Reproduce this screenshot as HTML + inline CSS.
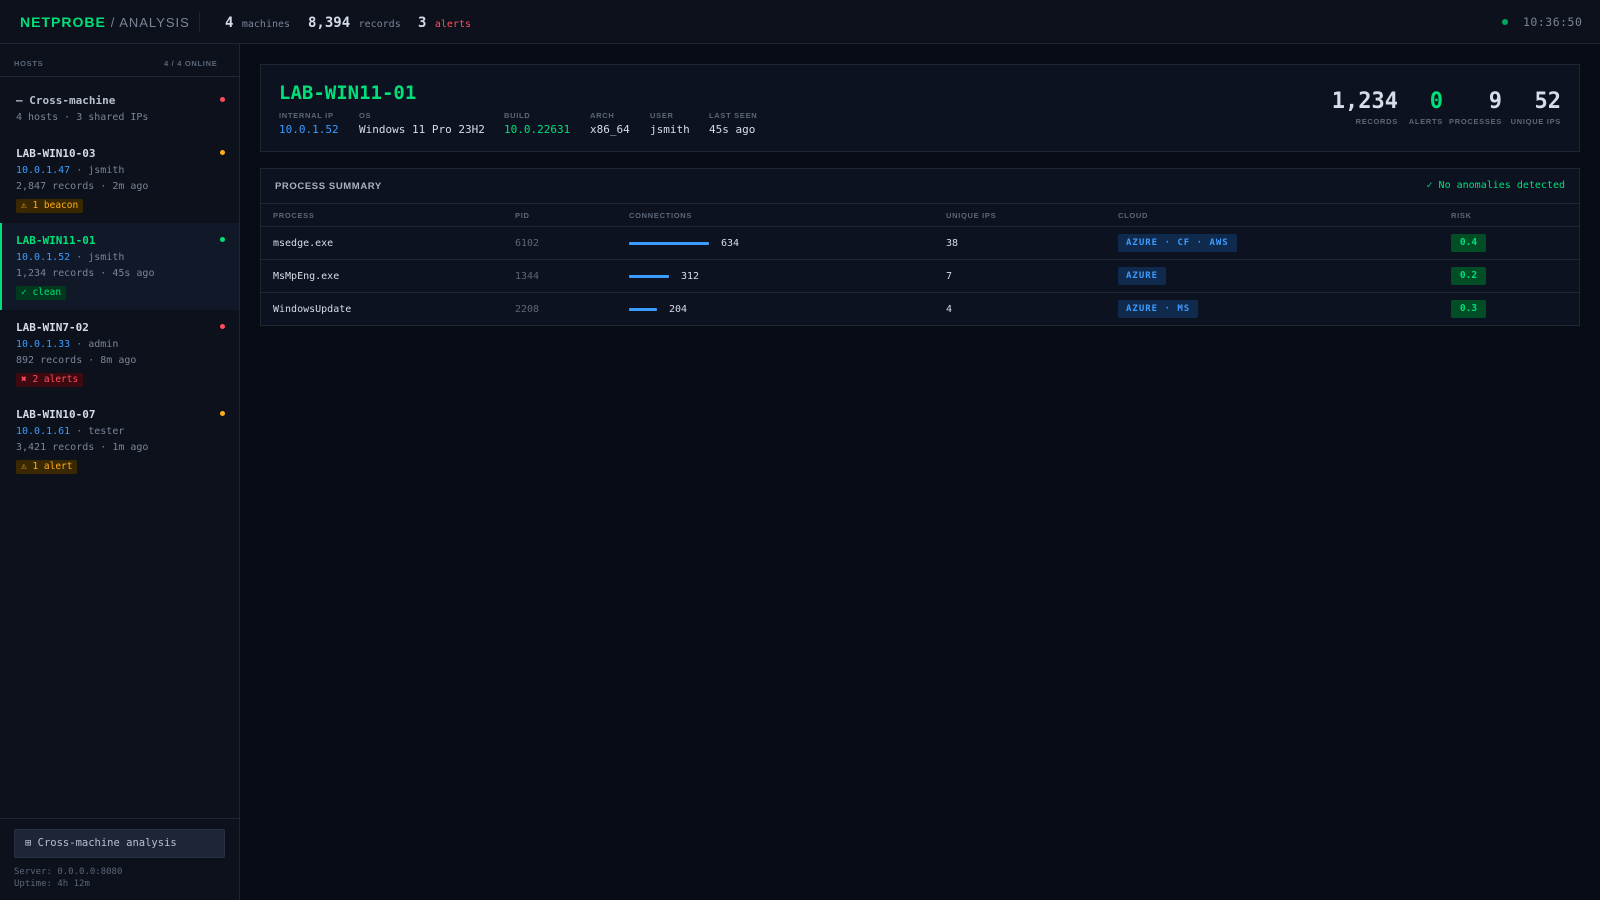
<!DOCTYPE html>
<html><head><meta charset="utf-8"><style>
*{box-sizing:border-box;margin:0;padding:0}
body{width:1600px;height:900px;background:#080c14;font-family:"DejaVu Sans Mono","Liberation Mono",monospace;color:#d6dde8;position:relative;overflow:hidden}
.a{position:absolute;white-space:nowrap}
.lbl{font-family:"Liberation Sans",sans-serif;font-size:7.5px;letter-spacing:0.7px;color:#5c6778;text-transform:uppercase;font-weight:bold}
.hdr{left:0;top:0;width:1600px;height:44px;background:#0c111c;border-bottom:1px solid #1e2636}
.side{left:0;top:44px;width:240px;height:856px;background:#0c111c;border-right:1px solid #1e2636}
.card{background:#0c1220;border:1px solid #1e2636}
.t{font-size:11px;font-weight:bold;color:#d6dde8}
.s{font-size:10px;color:#7a8596}
.ip{color:#3b9cff}
.dot{width:5px;height:5px;border-radius:50%}
.badge{font-size:9.5px;padding:0 5px;height:14px;line-height:14px;border-radius:2px}
.pill{font-size:9px;font-weight:bold;letter-spacing:1px;height:18px;line-height:18px;padding:0 8px;border-radius:2px;background:#0f2a4d;color:#3b9cff}
.risk{font-size:9.5px;font-weight:bold;height:18px;line-height:18px;width:35px;text-align:center;border-radius:2px;background:#004d26;color:#00e07a}
.row{font-size:10px;color:#d6dde8}
.bar{height:3px;background:#3b9cff;border-radius:1px}
</style></head><body>
<div class="a hdr"></div>
<div class="a" style="left:20px;top:14px;font-family:'Liberation Sans',sans-serif;font-size:14px;font-weight:bold;letter-spacing:1px;color:#00e07a">NETPROBE <span style="font-weight:normal;font-size:13px;color:#7a8596;letter-spacing:1px">/ ANALYSIS</span></div>
<div class="a" style="left:199px;top:12px;width:1px;height:20px;background:#1e2636"></div>
<div class="a" style="left:225px;top:15px;font-size:14px;font-weight:bold">4 <span style="font-size:10px;font-weight:normal;color:#7a8596">machines</span></div>
<div class="a" style="left:308px;top:15px;font-size:14px;font-weight:bold">8,394 <span style="font-size:10px;font-weight:normal;color:#7a8596">records</span></div>
<div class="a" style="left:418px;top:15px;font-size:14px;font-weight:bold">3 <span style="font-size:10px;font-weight:normal;color:#ff4d5e">alerts</span></div>
<div class="a dot" style="left:1502px;top:19px;width:6px;height:6px;background:#00a85a"></div>
<div class="a" style="left:1523px;top:15px;font-size:11.5px;color:#7a8596;letter-spacing:0.5px">10:36:50</div>

<div class="a side"></div>
<div class="a lbl" style="left:14px;top:59px">Hosts</div>
<div class="a lbl" style="left:164px;top:59px">4 / 4 Online</div>
<div class="a" style="left:0;top:76px;width:239px;height:1px;background:#1e2636"></div>

<div class="a t" style="left:16px;top:94px;color:#b8c0cc">— Cross-machine</div>
<div class="a s" style="left:16px;top:112px">4 hosts · 3 shared IPs</div>
<div class="a dot" style="left:220px;top:97px;background:#ff4d5e"></div>

<div class="a t" style="left:16px;top:147px">LAB-WIN10-03</div>
<div class="a s" style="left:16px;top:165px"><span class="ip">10.0.1.47</span> · jsmith</div>
<div class="a s" style="left:16px;top:181px">2,847 records · 2m ago</div>
<div class="a badge" style="left:16px;top:199px;background:#3a2800;color:#ffae1a">⚠ 1 beacon</div>
<div class="a dot" style="left:220px;top:150px;background:#ffae1a"></div>

<div class="a" style="left:0;top:223px;width:239px;height:87px;background:#111827;border-left:2px solid #00e07a"></div>
<div class="a t" style="left:16px;top:234px;color:#00e07a">LAB-WIN11-01</div>
<div class="a s" style="left:16px;top:252px"><span class="ip">10.0.1.52</span> · jsmith</div>
<div class="a s" style="left:16px;top:268px">1,234 records · 45s ago</div>
<div class="a badge" style="left:16px;top:286px;background:#00391d;color:#00e07a">✓ clean</div>
<div class="a dot" style="left:220px;top:237px;background:#00e07a"></div>

<div class="a t" style="left:16px;top:321px">LAB-WIN7-02</div>
<div class="a s" style="left:16px;top:339px"><span class="ip">10.0.1.33</span> · admin</div>
<div class="a s" style="left:16px;top:355px">892 records · 8m ago</div>
<div class="a badge" style="left:16px;top:373px;background:#3d0a12;color:#ff4d5e">✖ 2 alerts</div>
<div class="a dot" style="left:220px;top:324px;background:#ff4d5e"></div>

<div class="a t" style="left:16px;top:408px">LAB-WIN10-07</div>
<div class="a s" style="left:16px;top:426px"><span class="ip">10.0.1.61</span> · tester</div>
<div class="a s" style="left:16px;top:442px">3,421 records · 1m ago</div>
<div class="a badge" style="left:16px;top:460px;background:#3a2800;color:#ffae1a">⚠ 1 alert</div>
<div class="a dot" style="left:220px;top:411px;background:#ffae1a"></div>

<div class="a" style="left:0;top:818px;width:239px;height:1px;background:#1e2636"></div>
<div class="a" style="left:14px;top:829px;width:211px;height:29px;background:#1c2636;border:1px solid #263042;border-radius:2px;font-size:10.5px;color:#b8c0cc;line-height:27px;padding-left:10px">⊞ Cross-machine analysis</div>
<div class="a s" style="left:14px;top:867px;font-size:9px;color:#5c6778">Server: 0.0.0.0:8080</div>
<div class="a s" style="left:14px;top:879px;font-size:9px;color:#5c6778">Uptime: 4h 12m</div>

<div class="a card" style="left:260px;top:64px;width:1320px;height:88px"></div>
<div class="a" style="left:279px;top:82px;font-size:19px;font-weight:bold;color:#00e07a">LAB-WIN11-01</div>
<div class="a lbl" style="left:279px;top:111px">Internal IP</div>
<div class="a lbl" style="left:359px;top:111px">OS</div>
<div class="a lbl" style="left:504px;top:111px">Build</div>
<div class="a lbl" style="left:590px;top:111px">Arch</div>
<div class="a lbl" style="left:650px;top:111px">User</div>
<div class="a lbl" style="left:709px;top:111px">Last seen</div>
<div class="a" style="left:279px;top:123px;font-size:11px;color:#3b9cff">10.0.1.52</div>
<div class="a" style="left:359px;top:123px;font-size:11px">Windows 11 Pro 23H2</div>
<div class="a" style="left:504px;top:123px;font-size:11px;color:#00e07a">10.0.22631</div>
<div class="a" style="left:590px;top:123px;font-size:11px">x86_64</div>
<div class="a" style="left:650px;top:123px;font-size:11px">jsmith</div>
<div class="a" style="left:709px;top:123px;font-size:11px">45s ago</div>

<div class="a" style="right:202px;top:89px;font-size:22px;font-weight:bold;color:#d6dde8">1,234</div>
<div class="a lbl" style="right:202px;top:117px">Records</div>
<div class="a" style="right:157px;top:89px;font-size:22px;font-weight:bold;color:#00e07a">0</div>
<div class="a lbl" style="right:157px;top:117px">Alerts</div>
<div class="a" style="right:98px;top:89px;font-size:22px;font-weight:bold">9</div>
<div class="a lbl" style="right:98px;top:117px">Processes</div>
<div class="a" style="right:39px;top:89px;font-size:22px;font-weight:bold">52</div>
<div class="a lbl" style="right:39px;top:117px">Unique IPs</div>

<div class="a card" style="left:260px;top:168px;width:1320px;height:158px"></div>
<div class="a lbl" style="left:275px;top:181px;font-size:9.5px;color:#a8b2c0;letter-spacing:0.6px">Process Summary</div>
<div class="a" style="right:35px;top:180px;font-size:10px;color:#00e07a">✓ No anomalies detected</div>
<div class="a" style="left:261px;top:203px;width:1318px;height:1px;background:#1e2636"></div>
<div class="a lbl" style="left:273px;top:211px">Process</div>
<div class="a lbl" style="left:515px;top:211px">PID</div>
<div class="a lbl" style="left:629px;top:211px">Connections</div>
<div class="a lbl" style="left:946px;top:211px">Unique IPs</div>
<div class="a lbl" style="left:1118px;top:211px">Cloud</div>
<div class="a lbl" style="left:1451px;top:211px">Risk</div>
<div class="a" style="left:261px;top:226px;width:1318px;height:1px;background:#1e2636"></div>
<div class="a" style="left:261px;top:259px;width:1318px;height:1px;background:#1e2636"></div>
<div class="a" style="left:261px;top:292px;width:1318px;height:1px;background:#1e2636"></div>

<div class="a row" style="left:273px;top:238px">msedge.exe</div>
<div class="a row" style="left:515px;top:238px;color:#5c6778">6102</div>
<div class="a bar" style="left:629px;top:242px;width:80px"></div>
<div class="a row" style="left:721px;top:238px">634</div>
<div class="a row" style="left:946px;top:238px">38</div>
<div class="a pill" style="left:1118px;top:234px">AZURE · CF · AWS</div>
<div class="a risk" style="left:1451px;top:234px">0.4</div>

<div class="a row" style="left:273px;top:271px">MsMpEng.exe</div>
<div class="a row" style="left:515px;top:271px;color:#5c6778">1344</div>
<div class="a bar" style="left:629px;top:275px;width:40px"></div>
<div class="a row" style="left:681px;top:271px">312</div>
<div class="a row" style="left:946px;top:271px">7</div>
<div class="a pill" style="left:1118px;top:267px">AZURE</div>
<div class="a risk" style="left:1451px;top:267px">0.2</div>

<div class="a row" style="left:273px;top:304px">WindowsUpdate</div>
<div class="a row" style="left:515px;top:304px;color:#5c6778">2208</div>
<div class="a bar" style="left:629px;top:308px;width:28px"></div>
<div class="a row" style="left:669px;top:304px">204</div>
<div class="a row" style="left:946px;top:304px">4</div>
<div class="a pill" style="left:1118px;top:300px">AZURE · MS</div>
<div class="a risk" style="left:1451px;top:300px">0.3</div>
</body></html>
